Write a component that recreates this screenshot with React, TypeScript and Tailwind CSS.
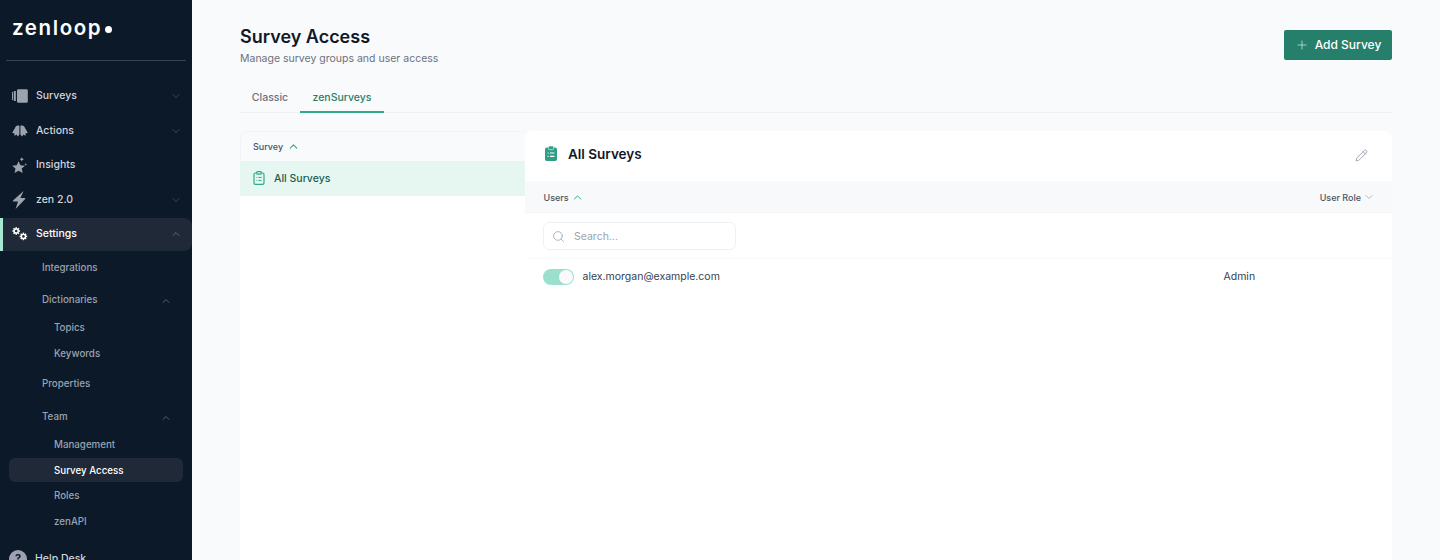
import { ChevronDown, ChevronUp, Pencil, Plus, Search } from 'lucide-react'
import type { ReactNode } from 'react'

const SurveysIcon = () => (
  <svg width="16" height="14" viewBox="0 0 16 14" fill="#9ca3af">
    <rect x="0" y="3" width="1" height="8" />
    <rect x="1.8" y="2" width="2" height="10" />
    <path d="M6.4 .2 H14.4 Q15.8 .2 15.8 1.6 V12.4 Q15.8 13.8 14.4 13.8 H6.4 Q5 13.8 5 12.4 V1.6 Q5 .2 6.4 .2 Z" />
  </svg>
)

const ActionsIcon = () => (
  <svg width="16" height="12" viewBox="0 0 16 12" fill="#9ca3af">
    <path d="M7.4 .8 C5 0 3.6 1 3 3 L.2 7.8 L2.4 8.4 L2.6 11 L4.4 9.4 L6 11.4 L7.4 9.4 Z" />
    <path d="M8.4 .8 C11 0 12.4 1 13 3 L15.8 7.8 L13.6 8.4 L13.4 11 L11.6 9.4 L10 11.4 L8.4 9.4 Z" />
  </svg>
)

const InsightsIcon = () => (
  <svg width="16" height="16" viewBox="0 0 16 16" fill="#9ca3af">
    <path d="M6.6 4.2 L8.5 8.2 L13 8.7 L9.7 11.6 L10.7 16 L6.6 13.7 L2.5 16 L3.5 11.6 L.2 8.7 L4.7 8.2 Z" />
    <path d="M9.8 .2 L10.5 1.6 L11.9 2.3 L10.5 3 L9.8 4.4 L9.1 3 L7.7 2.3 L9.1 1.6 Z" />
    <path d="M13.8 6 L14.2 7 L15.2 7.4 L14.2 7.8 L13.8 8.8 L13.4 7.8 L12.4 7.4 L13.4 7 Z" />
  </svg>
)

const BoltIcon = () => (
  <svg width="14" height="18" viewBox="0 0 14 18" fill="#9ca3af">
    <path d="M11.6 0 L1 9.6 Q.4 10.6 1.6 10.6 H6 L3.6 18 L13.2 8 Q13.8 7 12.6 7 H8.4 Z" />
  </svg>
)

const Gear = ({ x, y, r, color }: { x: number; y: number; r: number; color: string }) => (
  <g>
    <circle cx={x} cy={y} r={r * 0.72} fill={color} />
    {[0, 45, 90, 135].map((a) => (
      <rect
        key={a}
        x={x - r * 0.2}
        y={y - r}
        width={r * 0.4}
        height={r * 2}
        fill={color}
        transform={`rotate(${a} ${x} ${y})`}
      />
    ))}
    <circle cx={x} cy={y} r={r * 0.34} fill="#1f2937" />
  </g>
)

const SettingsIcon = () => (
  <svg width="16" height="14" viewBox="0 0 16 14">
    <Gear x={4.2} y={4} r={3.8} color="#ffffff" />
    <Gear x={11.4} y={9.4} r={3.8} color="#ffffff" />
  </svg>
)

const ClipboardOutline = () => (
  <svg width="12" height="14" viewBox="0 0 12 14" fill="none" stroke="#2fa98a" strokeWidth="1.2">
    <rect x="1" y="2" width="10" height="11.4" rx="1.4" />
    <rect x="3.8" y=".6" width="4.4" height="2.6" rx=".8" fill="#e6f7f2" />
    <path d="M3.4 6.4h.8M5.4 6.4h3.2M3.4 9.4h.8M5.4 9.4h3.2" strokeWidth="1" />
  </svg>
)

const ClipboardSolid = () => (
  <svg width="12" height="15" viewBox="0 0 12 15">
    <rect x="0" y="1.6" width="12" height="13.4" rx="1.8" fill="#2f9e84" />
    <rect x="3.4" y="0" width="5.2" height="3.6" rx="1" fill="#2f9e84" stroke="#ffffff" strokeWidth=".6" />
    <path d="M2.6 7h1M5 7h4.4M2.6 10.4h1M5 10.4h4.4" stroke="#ffffff" strokeWidth="1.1" />
  </svg>
)

function NavItem({ icon, label, open, active }: { icon: ReactNode; label: string; open?: boolean; active?: boolean }) {
  return (
    <div
      className={`flex h-[33px] items-center justify-between rounded-r-lg pr-[10px] pl-3 ${
        active ? 'border-l-[3px] border-[#a7e8d3] bg-[#1f2937] pl-[9px] text-white' : 'text-[#d1d5db]'
      }`}
    >
      <div className="flex items-center">
        <div className="flex w-[24px] justify-start">{icon}</div>
        <span className="text-[10.5px] font-medium">{label}</span>
      </div>
      {open === true && <ChevronUp size={12} strokeWidth={1} className="text-[#9ca3af]" />}
      {open === false && <ChevronDown size={12} strokeWidth={1} className="text-[#6b7280]" />}
    </div>
  )
}

function SubItem({ label, mt, open }: { label: string; mt: string; open?: boolean }) {
  return (
    <div className={`flex h-4 items-center justify-between pr-5 pl-[42px] text-[9.75px] font-medium text-[#9ca3af] ${mt}`}>
      <span>{label}</span>
      {open && <ChevronUp size={12} strokeWidth={1} />}
    </div>
  )
}

function ChildItem({ label, mt, active }: { label: string; mt: string; active?: boolean }) {
  return (
    <div
      className={`mx-[9px] flex h-[24px] items-center rounded-md pl-[45px] text-[9.75px] font-medium ${mt} ${
        active ? 'bg-[#1f2937] pt-[3px] text-white' : 'text-[#9ca3af]'
      }`}
    >
      {label}
    </div>
  )
}

function Sidebar() {
  return (
    <aside className="h-[560px] w-[192px] shrink-0 overflow-hidden bg-[#0b1929]">
      <div className="flex h-[60px] items-center px-3 pb-[3px]">
        <span className="text-[20.5px] leading-none font-semibold tracking-[1.6px] text-white">zenloop</span>
        <span className="mt-[2px] ml-[3px] h-[7px] w-[7px] rounded-full bg-white" />
      </div>
      <div className="mx-[6px] h-px bg-[#374151]" />
      <nav className="mt-[18.5px]">
        <div className="flex flex-col gap-[1.5px]">
          <NavItem icon={<SurveysIcon />} label="Surveys" open={false} />
          <NavItem icon={<ActionsIcon />} label="Actions" open={false} />
          <NavItem icon={<InsightsIcon />} label="Insights" />
          <NavItem icon={<BoltIcon />} label="zen 2.0" open={false} />
          <NavItem icon={<SettingsIcon />} label="Settings" open active />
        </div>
        <SubItem label="Integrations" mt="mt-[10px]" />
        <SubItem label="Dictionaries" mt="mt-[16px]" open />
        <ChildItem label="Topics" mt="mt-[8px]" />
        <ChildItem label="Keywords" mt="mt-[2px]" />
        <SubItem label="Properties" mt="mt-[10px]" />
        <SubItem label="Team" mt="mt-[17px]" open />
        <ChildItem label="Management" mt="mt-[8px]" />
        <ChildItem label="Survey Access" mt="mt-[0.5px]" active />
        <ChildItem label="Roles" mt="mt-[2.5px]" />
        <ChildItem label="zenAPI" mt="mt-[2px]" />
        <div className="mt-[15px] flex items-center pl-[9px] text-[#d1d5db]">
          <span className="flex h-[18px] w-[18px] items-center justify-center rounded-full bg-[#9ca3af] text-[11px] font-bold text-[#0b1929]">
            ?
          </span>
          <span className="ml-[8px] text-[10.5px] font-medium">Help Desk</span>
        </div>
      </nav>
    </aside>
  )
}

export default function App() {
  return (
    <div className="flex h-[560px] w-[1440px] overflow-hidden bg-[#f9fafc] font-['Inter',sans-serif]">
      <Sidebar />
      <main className="flex min-w-0 flex-1 flex-col px-12 pt-[26.4px]">
        <div className="flex items-start justify-between">
          <div>
            <h1 className="text-[18px] leading-[22px] font-semibold text-[#111827]">Survey Access</h1>
            <p className="mt-[3px] text-[10.5px] leading-4 text-[#6b7280]">Manage survey groups and user access</p>
          </div>
          <button className="mt-[3.6px] flex h-[30px] w-[108px] items-center justify-center gap-[6px] rounded-[2px] bg-[#257f6b] text-[12px] font-medium text-white">
            <Plus size={14} strokeWidth={1.25} className="text-[#d1e9e2]" />
            Add Survey
          </button>
        </div>

        <div className="mt-[17.6px] flex h-[28px] border-b border-[#f0f1f3]">
          <div className="flex h-[28px] w-[60px] items-center justify-center pb-[2px] text-[10.5px] font-medium text-[#6b7280]">Classic</div>
          <div className="flex h-[28px] w-[84px] items-center justify-center border-b-2 border-[#2fa98a] text-[10.5px] font-medium text-[#257f6b]">zenSurveys</div>
        </div>

        <div className="mt-[18px] flex flex-1">
          <section className="flex w-[285px] shrink-0 flex-col">
            <div className="flex h-[30px] items-center gap-[4px] rounded-tl-lg border-t border-l border-[#f3f4f6] pl-3 text-[9px] font-medium text-[#4b5563]">
              Survey
              <ChevronUp size={13} strokeWidth={2} className="text-[#2fa98a]" />
            </div>
            <div className="flex h-[35px] items-center gap-[9px] bg-[#e6f7f2] pl-[13px] text-[10.5px] font-medium text-[#1c5c4e]">
              <ClipboardOutline />
              All Surveys
            </div>
            <div className="flex-1 bg-white" />
          </section>

          <section className="flex min-w-0 flex-1 flex-col rounded-t-lg bg-white">
            <div className="flex h-[50px] items-center justify-between pr-[24px] pb-[4px] pl-[20px]">
              <div className="flex items-center gap-[11px]">
                <ClipboardSolid />
                <span className="text-[13.5px] font-semibold text-[#111827]">All Surveys</span>
              </div>
              <Pencil size={13} strokeWidth={1.5} className="mt-[3px] text-[#8b92a0]" />
            </div>
            <div className="flex h-[32px] items-center justify-between border-b border-[#f3f4f6] bg-[#f8f9fb] pt-[2px] pr-[17px] pl-[18.5px] text-[9px] font-medium text-[#4b5563]">
              <div className="flex items-center gap-[2px]">
                Users
                <ChevronUp size={13} strokeWidth={1.75} className="text-[#2fa98a]" />
              </div>
              <div className="flex items-center gap-[2px]">
                User Role
                <ChevronDown size={12} strokeWidth={1} className="text-[#6b7280]" />
              </div>
            </div>
            <div className="flex h-[46px] items-center border-b border-[#f9fafb] pt-[2px] pl-[18px]">
              <div className="flex h-[28px] w-[193px] items-center rounded-md border border-[#f0f1f3] pl-[8px] text-[10.5px] text-[#9ca3af]">
                <Search size={13} strokeWidth={1.25} className="text-[#8b92a0]" />
                <span className="ml-[9px]">Search...</span>
              </div>
            </div>
            <div className="flex h-[34px] items-center pt-[2px] pl-[18px] text-[10.5px] text-[#374151]">
              <div className="flex h-[16px] w-[31px] items-center justify-end rounded-full bg-[#9ae0cd] pr-px">
                <span className="h-[14px] w-[14px] rounded-full bg-[#f9fafb]" />
              </div>
              <span className="ml-[8.5px] w-[641px]">alex.morgan@example.com</span>
              <span>Admin</span>
            </div>
          </section>
        </div>
      </main>
    </div>
  )
}
